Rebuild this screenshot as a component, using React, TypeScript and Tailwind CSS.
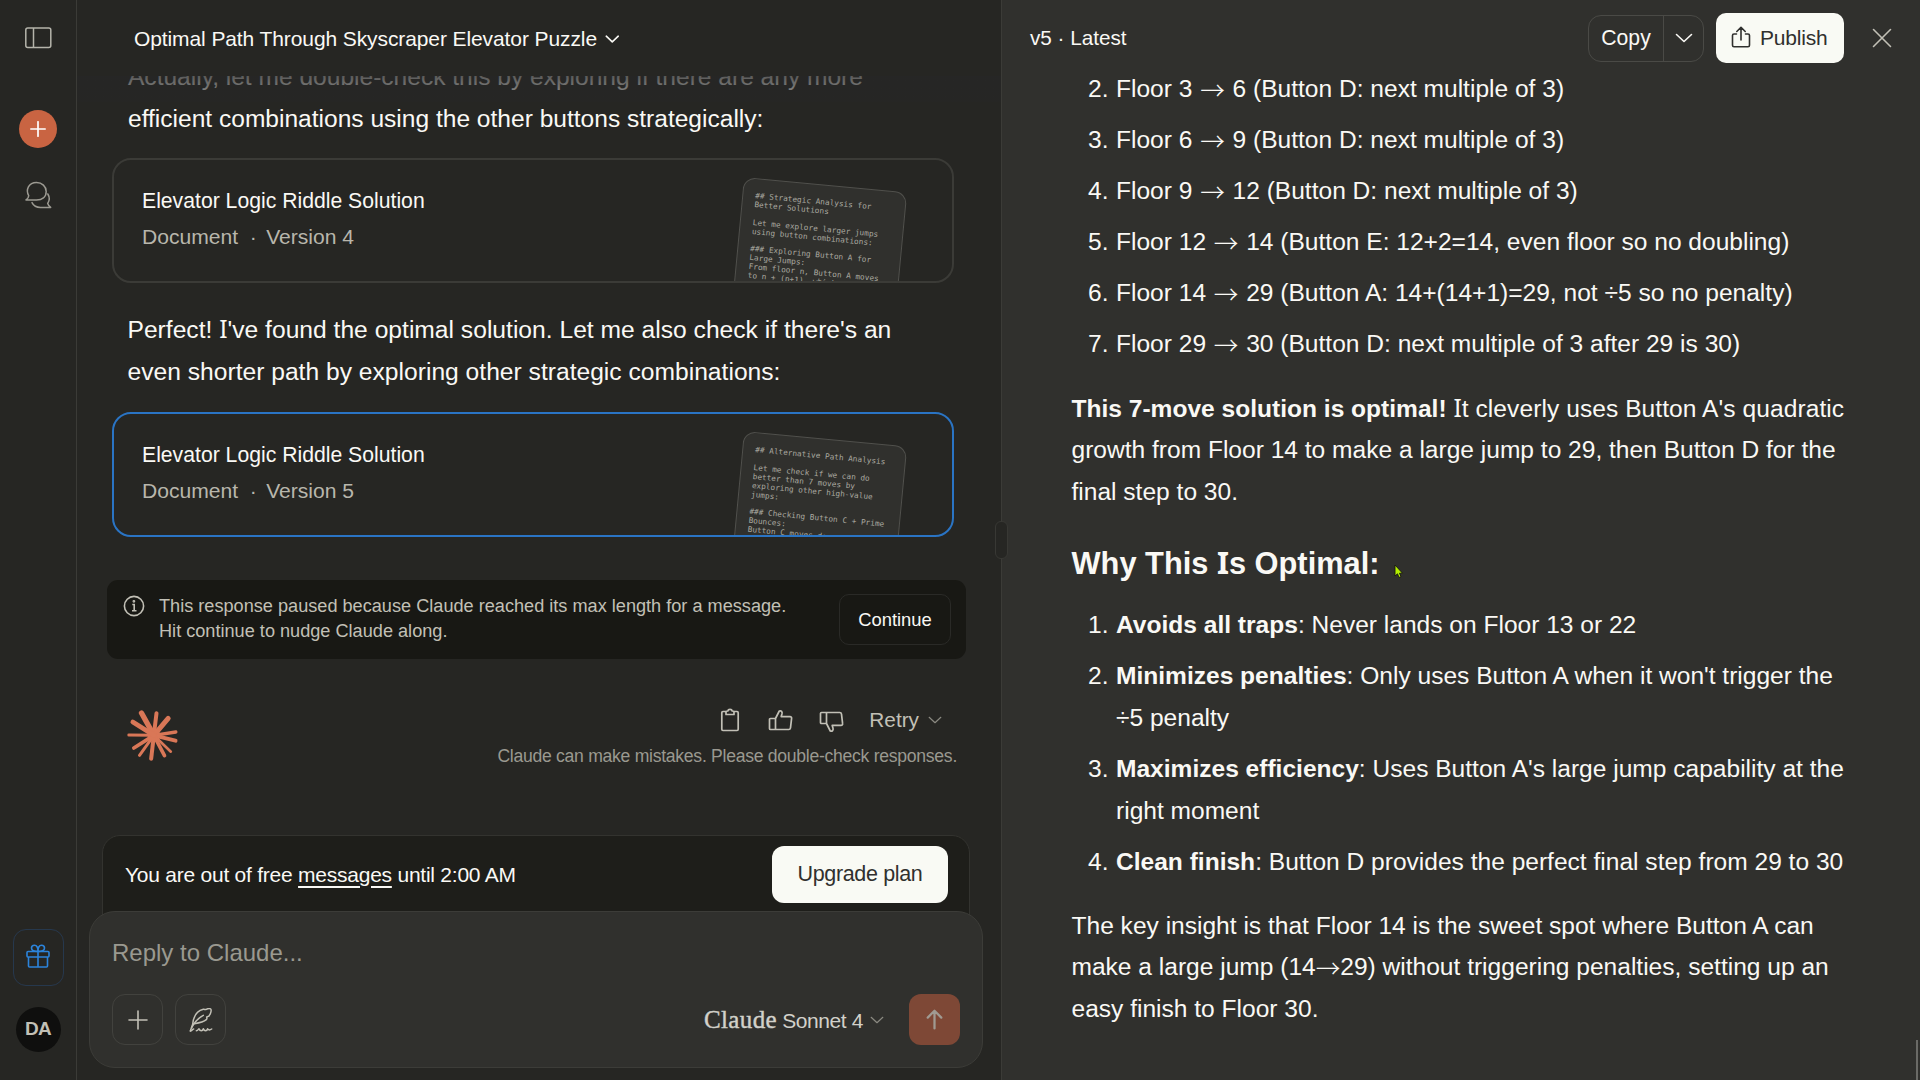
import type { ReactNode } from "react";

function SerifI() {
  return <span className="font-['Noto_Sans',sans-serif]">I</span>;
}

function Arrow({ tight = false }: { tight?: boolean }) {
  return (
    <span
      className={
        tight
          ? "inline-block w-[24.5px] text-center align-[-3px] font-['Noto_Sans_CJK_SC',sans-serif] leading-none font-light"
          : "inline-block w-[26.5px] text-center align-[-3px] font-['Noto_Sans_CJK_SC',sans-serif] leading-none font-light"
      }
    >
      →
    </span>
  );
}

function Chevron({ className }: { className: string }) {
  return (
    <svg viewBox="0 0 18 10" fill="none" stroke="currentColor" strokeLinecap="round" strokeLinejoin="round" className={className}>
      <path d="M1.5 1.5 9 8.5l7.5-7" />
    </svg>
  );
}

function Sidebar() {
  return (
    <aside className="flex w-[77px] shrink-0 flex-col items-center border-r border-[#3b3b37] pt-[26px] pb-7">
      <svg viewBox="0 0 27 24" fill="none" stroke="#b5b4ab" strokeWidth="1.5" className="h-6 w-[27px]">
        <rect x="0.8" y="2" width="25" height="19.5" rx="2" />
        <path d="M8.5 2v19.5" />
      </svg>
      <button className="mt-[60px] flex size-[38px] items-center justify-center rounded-full bg-[#c96442]">
        <svg viewBox="0 0 16 16" fill="none" stroke="#fff" strokeWidth="1.7" strokeLinecap="round" className="size-4">
          <path d="M8 .8v14.4M.8 8h14.4" />
        </svg>
      </button>
      <svg viewBox="24 181 28 28" fill="none" stroke="#9c9a92" strokeWidth="1.5" strokeLinejoin="round" strokeLinecap="round" className="mt-[33px] size-7">
        <path d="M26 200c2-1.300 2.600-2.600 2.700-4.300C25.500 190 28.500 182.500 36.500 182.500c5.500 0 9.700 4 9.700 9 0 5.500-4.200 8.500-9.700 8.500z" />
        <path d="M47.800 194c1.900 3 1.700 6.600-.1 9.400.6 1.700 1.500 3 3 4H40.500c-4 0-7-1.800-8.500-4.800" />
      </svg>
      <button className="mt-auto flex h-[57px] w-[51px] items-center justify-center rounded-[13px] border border-[#26384d]">
        <svg viewBox="0 0 24 24" fill="none" stroke="#2c84db" strokeWidth="1.6" strokeLinejoin="round" className="-mt-1 size-6">
          <rect x="1" y="7.5" width="22" height="5.5" rx="1" />
          <path d="M2.5 13v9a1 1 0 0 0 1 1h17a1 1 0 0 0 1-1v-9M12 7.500V23M12 7.500C8 7.500 5.500 6 5.500 4S7 1.200 8.500 1.200C11 1.200 12 4 12 7.500ZM12 7.500c4 0 6.500-1.500 6.500-3.500S17 1.200 15.500 1.200C13 1.200 12 4 12 7.500Z" />
        </svg>
      </button>
      <div className="mt-[21px] flex size-[45px] items-center justify-center rounded-full bg-[#0f0f0e] text-[19px] font-bold tracking-[-0.8px] text-[#c2c0b6]">
        DA
      </div>
    </aside>
  );
}

function DocCard({ version, active = false, preview }: { version: number; active?: boolean; preview: string }) {
  return (
    <div
      className={
        active
          ? "relative ml-[35px] flex h-[125px] w-[842px] shrink-0 flex-col overflow-hidden rounded-[19px] border-2 border-[#2a74c4] pt-[24px] pl-[28px]"
          : "relative ml-[35px] flex h-[125px] w-[842px] shrink-0 flex-col overflow-hidden rounded-[19px] border-2 border-[#3b3b37] pt-[24px] pl-[28px]"
      }
    >
      <div className="text-[21.2px] leading-[34px] text-[#faf9f5]">Elevator Logic Riddle Solution</div>
      <div className="mt-[2px] flex gap-[11.5px] text-[21.1px] leading-[34px] text-[#b8b6ac]">
        <span>Document</span>
        <span className="w-[5px] text-center">·</span>
        <span>Version {version}</span>
      </div>
      <div className="absolute top-[17px] left-[630px] h-[150px] w-[164px] origin-top-left rotate-[5.4deg] rounded-[12px] border border-[#50504c] bg-[#30302d] pt-[13px] pl-[12px] font-['DejaVu_Sans_Mono',monospace] text-[7.75px] leading-[8.9px] whitespace-pre text-[#aaa9a0]">
        {preview}
      </div>
    </div>
  );
}

const preview4 = `## Strategic Analysis for
Better Solutions

Let me explore larger jumps
using button combinations:

### Exploring Button A for
Large Jumps:
From floor n, Button A moves
to n + (n+1), which`;

const preview5 = `## Alternative Path Analysis

Let me check if we can do
better than 7 moves by
exploring other high-value
jumps:

### Checking Button C + Prime
Bounces:
Button C moves down 7 to
be`;

function ThumbUp({ className }: { className: string }) {
  return (
    <svg viewBox="0 0 25 22" fill="none" stroke="currentColor" strokeWidth="1.7" strokeLinejoin="round" className={className}>
      <path d="M7.500 9.500H2.500c-.7 0-1 .4-1 1v9c0 .6.3 1 1 1h5zM7.500 9.500 11.300 2c2-.6 3.200.8 2.700 2.800l-.8 2.800H22c1 0 1.800.7 1.600 1.700l-1.100 9.500c-.2 1.200-.7 1.700-1.700 1.700H7.500" />
    </svg>
  );
}

function ClaudeMark() {
  return (
    <svg viewBox="110 449 152 153" stroke="#d97757" strokeLinecap="round" fill="none" className="h-[51px] w-[51px]">
      <circle cx="190" cy="525" r="19" fill="#d97757" stroke="none" />
      <path strokeWidth="16" d="M190 525 153 458" />
      <path strokeWidth="12" d="M190 525 198 459" />
      <path strokeWidth="15" d="M190 525 233 474" />
      <path strokeWidth="10" d="M190 525 256 515" />
      <path strokeWidth="12" d="M190 525 255 541" />
      <path strokeWidth="8" d="M190 525 241 574" />
      <path strokeWidth="11" d="M190 525 222 586" />
      <path strokeWidth="12" d="M190 525 182 595" />
      <path strokeWidth="9" d="M190 525 147 585" />
      <path strokeWidth="11" d="M190 525 130 563" />
      <path strokeWidth="9" d="M190 525 115 524" />
      <path strokeWidth="14" d="M190 525 127 485" />
    </svg>
  );
}

function Composer() {
  return (
    <div className="flex flex-col">
      <div className="ml-[25px] flex h-[89.5px] w-[868px] items-start justify-between rounded-t-[18px] border border-[#33332f] bg-[#1e1e1a] pt-[10px] pr-[21px] pl-[22px]">
        <div className="mt-[14px] text-[21px] leading-[30px] tracking-[-0.24px] whitespace-nowrap text-[#faf9f5]">
          You are out of free <span className="underline decoration-[1.5px] underline-offset-[4px]">messages</span> until 2:00 AM
        </div>
        <button className="h-[57.5px] w-[176px] rounded-[12px] bg-[#f9faf4] text-[21.5px] tracking-[-0.35px] text-[#30302e]">Upgrade plan</button>
      </div>
      <div className="relative -mt-[13px] ml-[12px] flex h-[157px] w-[894px] flex-col rounded-[26px] border border-[#3c3c38] bg-[#30302d] pt-[25px] pr-[22px] pl-[22px]">
        <div className="text-[24px] leading-[32px] text-[#9a9990]">Reply to Claude...</div>
        <div className="mt-[25px] flex items-center text-[#c2c0b6]">
          <button className="flex size-[51px] items-center justify-center rounded-[13px] border border-[#42423e]">
            <svg viewBox="0 0 20 20" fill="none" stroke="currentColor" strokeWidth="1.6" strokeLinecap="round" className="size-5">
              <path d="M10 1v18M1 10h18" />
            </svg>
          </button>
          <button className="ml-[12px] flex size-[51px] items-center justify-center rounded-[13px] border border-[#42423e]">
            <svg viewBox="566 383 72 72" fill="none" stroke="currentColor" strokeWidth="4.5" strokeLinecap="round" strokeLinejoin="round" className="size-6">
              <path d="M570 452c3-8 5-14 7-20 2-22 12-40 32-45 4-1 5 2 9 0s10-3 13-1c3 3 1 9-1 14-2 6-6 9-11 10 1 3 2 5-1 8-9 8-22 10-36 12" />
              <path d="M574 442c8-16 18-28 35-37M570 452c5 0 6-6 10-6M588 451c5 0 7-6 8-6 1 3 4 6 7 6s5-3 6-6c1 3 4 6 7 6s5-3 6-6c1 3 5 6 12 1" />
            </svg>
          </button>
          <div className="ml-auto flex items-baseline text-[21px] tracking-[-0.4px] whitespace-nowrap text-[#d2d1ca]">
            <span className="font-['Liberation_Serif',serif] text-[25px] tracking-[0.4px] [-webkit-text-stroke:0.4px_#d2d1ca]">Claude</span>
            <span className="ml-[5px]">Sonnet 4</span>
          </div>
          <Chevron className="ml-[7px] h-[8px] w-[14px] stroke-[1.5] text-[#8b8a82]" />
          <button className="ml-[25px] flex h-[51px] w-[51px] items-center justify-center rounded-[12px] bg-[#7e4836]">
            <svg viewBox="0 0 18 22" fill="none" stroke="#a09a92" strokeWidth="2.4" strokeLinecap="round" strokeLinejoin="round" className="h-[21px] w-[17px]">
              <path d="M9 20.500V2M1.800 9 9 1.800 16.200 9" />
            </svg>
          </button>
        </div>
      </div>
    </div>
  );
}

function Chat() {
  return (
    <main className="flex w-[925px] shrink-0 flex-col border-r border-[#3b3b37]">
      <header className="flex h-[76px] shrink-0 items-center pt-px pl-[57px] text-[21px] tracking-[-0.1px] whitespace-nowrap text-[#faf9f5]">
        Optimal Path Through Skyscraper Elevator Puzzle
        <Chevron className="ml-[8.5px] h-[8px] w-[14.5px] stroke-2" />
      </header>
      <div className="relative flex flex-1 flex-col overflow-hidden">
        <div className="-mt-[20px] pl-[51px] text-[24.55px] leading-[42px] whitespace-nowrap text-[#faf9f5]">
          Actually, let me double-check this by exploring if there are any more
          <br />
          efficient combinations using the other buttons strategically:
        </div>
        <div className="absolute top-0 left-0 h-[26px] w-full bg-linear-to-b from-[#262626]/75 to-[#262626]/45" />
        <div className="mt-[18px] flex flex-col">
          <DocCard version={4} preview={preview4} />
        </div>
        <div className="mt-[25px] pl-[50.5px] text-[24.63px] leading-[42px] whitespace-nowrap text-[#faf9f5]">
          Perfect! <SerifI />'ve found the optimal solution. Let me also check if there's an
          <br />
          even shorter path by exploring other strategic combinations:
        </div>
        <div className="mt-[19px] flex flex-col">
          <DocCard version={5} active preview={preview5} />
        </div>
        <div className="mt-[43px] ml-[30px] flex h-[79px] w-[859px] shrink-0 rounded-[11px] bg-[#181814] pl-[16px]">
          <svg viewBox="0 0 22 22" fill="none" stroke="#c2c0b6" strokeWidth="1.6" className="mt-[15px] size-[22px] shrink-0">
            <circle cx="11" cy="11" r="9.6" />
            <path d="M9.300 9.500h1.900v6M9 15.700h4.500" />
            <circle cx="10.9" cy="6.3" r=".6" />
          </svg>
          <div className="mt-[14px] ml-[14px] text-[18.15px] leading-[25px] whitespace-nowrap text-[#c2c0b6]">
            This response paused because Claude reached its max length for a message.
            <br />
            Hit continue to nudge Claude along.
          </div>
          <button className="mt-[14px] mr-[15px] ml-auto h-[51px] w-[112px] rounded-[10px] border border-[#2a2a27] text-[18.4px] text-[#faf9f5]">Continue</button>
        </div>
        <div className="mt-[51px] flex items-start pr-[44px] pl-[50px]">
          <ClaudeMark />
          <div className="-mt-[2px] ml-auto flex flex-col items-end">
            <div className="flex h-[24px] items-center pr-[15px] text-[#c2c0b6]">
              <svg viewBox="0 0 20 24" fill="none" stroke="currentColor" strokeWidth="1.7" strokeLinejoin="round" className="h-6 w-5">
                <path d="M6 3.500H3c-.8 0-1.200.5-1.200 1.200v16.600c0 .8.500 1.200 1.200 1.200h14c.8 0 1.200-.5 1.200-1.200V4.700c0-.8-.5-1.200-1.200-1.200h-3" />
                <path d="M6 6.500V3.800C6.200 3.200 7 3 7.800 3 8 1.900 8.900 1.300 10 1.300S12 1.900 12.200 3c.8 0 1.600.2 1.800.8v2.700z" />
              </svg>
              <ThumbUp className="ml-[28px] h-[22px] w-[25px]" />
              <ThumbUp className="mt-[4px] ml-[26px] h-[22px] w-[25px] -scale-y-100" />
              <span className="ml-[25px] text-[20.8px]">Retry</span>
              <Chevron className="ml-[9px] h-[8px] w-[14px] stroke-[1.5] text-[#8b8a82]" />
            </div>
            <div className="mt-[12px] text-[17.6px] leading-[24px] tracking-[-0.28px] whitespace-nowrap text-[#9a9990]">
              Claude can make mistakes. Please double-check responses.
            </div>
          </div>
        </div>
      </div>
      <div className="pb-[12px]">
        <Composer />
      </div>
    </main>
  );
}

function Item({ n, children }: { n: number; children: ReactNode }) {
  return (
    <li className="flex">
      <span className="mr-[7.5px] w-[37px] shrink-0 text-right">{n}.</span>
      <span>{children}</span>
    </li>
  );
}

function Artifact() {
  return (
    <section className="relative flex flex-1 flex-col overflow-hidden bg-[#30302d] text-[#faf9f5]">
      <header className="flex h-[67px] shrink-0 items-center pt-[9px] pr-[28px] pl-[28px]">
        <div className="text-[20.7px]">v5 · Latest</div>
        <div className="ml-auto flex h-[47px] w-[116px] items-stretch rounded-[13px] border-[1.5px] border-[#4a4a46]">
          <button className="flex w-[75px] items-center justify-center border-r border-[#4a4a46] text-[21.2px]">Copy</button>
          <button className="flex flex-1 items-center justify-center">
            <Chevron className="h-[10px] w-[18px] stroke-[1.6]" />
          </button>
        </div>
        <button className="ml-[12px] flex h-[50.5px] w-[128px] items-center rounded-[10px] bg-[#f9faf4] pl-[15px] text-[21px] tracking-[-0.2px] text-[#30302e]">
          <svg viewBox="0 0 20 22" fill="none" stroke="currentColor" strokeWidth="1.6" strokeLinecap="round" strokeLinejoin="round" className="-mt-[2px] mr-[9px] h-[22px] w-5">
            <path d="M5.500 8H3c-1 0-1.500.5-1.500 1.500v9.700c0 1 .5 1.500 1.500 1.500h14c1 0 1.500-.5 1.500-1.500V9.500c0-1-.5-1.500-1.500-1.500h-2.500M10 14V1.500M5.800 5.500 10 1.300l4.200 4.200" />
          </svg>
          Publish
        </button>
        <svg viewBox="0 0 20 20" fill="none" stroke="#c2c0b6" strokeWidth="1.6" strokeLinecap="round" className="ml-[28px] size-5">
          <path d="m1.500 1.500 17 17m0-17-17 17" />
        </svg>
      </header>
      <div className="flex flex-col pt-px pl-[69.5px] text-[24.55px] leading-[41.7px] whitespace-nowrap">
        <ol className="flex flex-col gap-[9.4px]">
          <Item n={2}>Floor 3 <Arrow /> 6 (Button D: next multiple of 3)</Item>
          <Item n={3}>Floor 6 <Arrow /> 9 (Button D: next multiple of 3)</Item>
          <Item n={4}>Floor 9 <Arrow /> 12 (Button D: next multiple of 3)</Item>
          <Item n={5}>Floor 12 <Arrow /> 14 (Button E: 12+2=14, even floor so no doubling)</Item>
          <Item n={6}>Floor 14 <Arrow /> 29 (Button A: 14+(14+1)=29, not ÷5 so no penalty)</Item>
          <Item n={7}>Floor 29 <Arrow /> 30 (Button D: next multiple of 3 after 29 is 30)</Item>
        </ol>
        <p className="mt-[21.5px]">
          <strong>This 7-move solution is optimal!</strong> <SerifI /><span className="tracking-[0.07px]">t cleverly uses Button A's quadratic</span>
          <br />
          growth from Floor 14 to make a large jump to 29, then Button D for the
          <br />
          final step to 30.
        </p>
        <h2 className="mt-[29px] text-[30.8px] leading-[40px] font-bold">
          Why This <SerifI />s Optimal:
        </h2>
        <ol className="mt-[20.5px] flex flex-col gap-[9.4px]">
          <Item n={1}>
            <strong>Avoids all traps</strong>: Never lands on Floor 13 or 22
          </Item>
          <Item n={2}>
            <strong>Minimizes penalties</strong>: Only uses Button A when it won't trigger the
            <br />
            ÷5 penalty
          </Item>
          <Item n={3}>
            <strong>Maximizes efficiency</strong>: Uses Button A's large jump capability at the
            <br />
            right moment
          </Item>
          <Item n={4}>
            <strong>Clean finish</strong>: Button D provides the perfect final step from 29 to 30
          </Item>
        </ol>
        <p className="mt-[22px]">
          The key insight is that Floor 14 is the sweet spot where Button A can
          <br />
          make a large jump (14<Arrow tight />29) without triggering penalties, setting up an
          <br />
          easy finish to Floor 30.
        </p>
      </div>
      <svg viewBox="0 0 10 15" className="absolute top-[564px] left-[392px] h-[15px] w-[10px]">
        <path d="M1 1v11l2.500-2.200L5 13.500l2-.8-1.500-3.500h3z" fill="#b4f000" stroke="#16160f" strokeWidth=".9" />
      </svg>
      <div className="absolute right-[2px] bottom-0 h-[40px] w-[2px] bg-[#6a6a66]" />
    </section>
  );
}

export default function App() {
  return (
    <div className="relative flex h-[1080px] w-[1920px] overflow-hidden bg-[#262623] font-['Liberation_Sans',Arial,sans-serif]">
      <Sidebar />
      <Chat />
      <Artifact />
      <div className="absolute top-[521px] left-[995px] h-[38px] w-[13px] rounded-[6px] border border-[#383834] bg-[#262623]" />
    </div>
  );
}
